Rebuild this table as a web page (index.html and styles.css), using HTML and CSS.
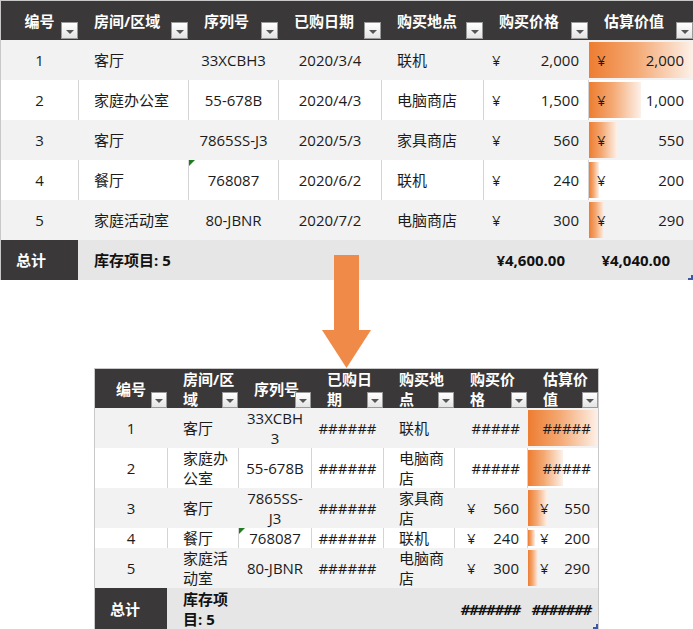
FILE: index.html
```html
<!DOCTYPE html>
<html lang="zh-CN">
<head>
<meta charset="utf-8">
<title>库存表</title>
<link rel="stylesheet" href="styles.css">
</head>
<body>
<div class="tbl top">
  <div class="row hd">
    <div class="c ctr">编号<i class="btn"></i></div>
    <div class="c lft">房间/区域<i class="btn"></i></div>
    <div class="c lft">序列号<i class="btn"></i></div>
    <div class="c lft">已购日期<i class="btn"></i></div>
    <div class="c lft">购买地点<i class="btn"></i></div>
    <div class="c lft">购买价格<i class="btn"></i></div>
    <div class="c lft">估算价值<i class="btn"></i></div>
  </div>
  <div class="row band">
    <div class="c ctr">1</div><div class="c lft">客厅</div><div class="c ctr">33XCBH3</div><div class="c ctr">2020/3/4</div><div class="c lft">联机</div>
    <div class="c acc"><span>¥</span><span>2,000</span></div>
    <div class="c acc"><i class="bar" style="width:104px"></i><span>¥</span><span>2,000</span></div>
  </div>
  <div class="row w">
    <div class="c ctr">2</div><div class="c lft">家庭办公室</div><div class="c ctr">55-678B</div><div class="c ctr">2020/4/3</div><div class="c lft">电脑商店</div>
    <div class="c acc"><span>¥</span><span>1,500</span></div>
    <div class="c acc"><i class="bar" style="width:52px"></i><span>¥</span><span>1,000</span></div>
  </div>
  <div class="row band">
    <div class="c ctr">3</div><div class="c lft">客厅</div><div class="c ctr">7865SS-J3</div><div class="c ctr">2020/5/3</div><div class="c lft">家具商店</div>
    <div class="c acc"><span>¥</span><span>560</span></div>
    <div class="c acc"><i class="bar" style="width:28px"></i><span>¥</span><span>550</span></div>
  </div>
  <div class="row w">
    <div class="c ctr">4</div><div class="c lft">餐厅</div><div class="c ctr"><i class="flag"></i>768087</div><div class="c ctr">2020/6/2</div><div class="c lft">联机</div>
    <div class="c acc"><span>¥</span><span>240</span></div>
    <div class="c acc"><i class="bar" style="width:10px"></i><span>¥</span><span>200</span></div>
  </div>
  <div class="row band">
    <div class="c ctr">5</div><div class="c lft">家庭活动室</div><div class="c ctr">80-JBNR</div><div class="c ctr">2020/7/2</div><div class="c lft">电脑商店</div>
    <div class="c acc"><span>¥</span><span>300</span></div>
    <div class="c acc"><i class="bar" style="width:15px"></i><span>¥</span><span>290</span></div>
  </div>
  <div class="row tot">
    <div class="c lft lbl">总计</div><div class="c lft">库存项目: 5</div><div class="c"></div><div class="c"></div><div class="c"></div>
    <div class="c tv">¥4,600.00</div>
    <div class="c tv">¥4,040.00</div>
  </div>
  <i class="grip"></i>
</div>

<div class="arrow">
  <svg width="49" height="113" viewBox="0 0 49 113"><rect x="12" y="0" width="25" height="76" fill="#f08a48"/><polygon points="0,75 49,75 24.5,113" fill="#f08a48"/></svg>
</div>

<div class="tbl bot">
  <div class="row hd">
    <div class="c ctr">编号<i class="btn sm"></i></div>
    <div class="c lft">房间/区<br>域<i class="btn sm"></i></div>
    <div class="c lft">序列号<i class="btn sm"></i></div>
    <div class="c lft">已购日<br>期<i class="btn sm"></i></div>
    <div class="c lft">购买地<br>点<i class="btn sm"></i></div>
    <div class="c lft">购买价<br>格<i class="btn sm"></i></div>
    <div class="c lft">估算价<br>值<i class="btn sm"></i></div>
  </div>
  <div class="row band">
    <div class="c ctr">1</div><div class="c lft">客厅</div><div class="c ctr">33XCBH<br>3</div><div class="c ctr">######</div><div class="c lft">联机</div>
    <div class="c rt">#####</div>
    <div class="c rt"><i class="bar" style="width:70px"></i><span>#####</span></div>
  </div>
  <div class="row w">
    <div class="c ctr">2</div><div class="c lft">家庭办<br>公室</div><div class="c ctr">55-678B</div><div class="c ctr">######</div><div class="c lft">电脑商<br>店</div>
    <div class="c rt">#####</div>
    <div class="c rt"><i class="bar" style="width:35px"></i><span>#####</span></div>
  </div>
  <div class="row band">
    <div class="c ctr">3</div><div class="c lft">客厅</div><div class="c ctr">7865SS-<br>J3</div><div class="c ctr">######</div><div class="c lft">家具商<br>店</div>
    <div class="c acc"><span>¥</span><span>560</span></div>
    <div class="c acc"><i class="bar" style="width:19px"></i><span>¥</span><span>550</span></div>
  </div>
  <div class="row w short">
    <div class="c ctr">4</div><div class="c lft">餐厅</div><div class="c ctr"><i class="flag"></i>768087</div><div class="c ctr">######</div><div class="c lft">联机</div>
    <div class="c acc"><span>¥</span><span>240</span></div>
    <div class="c acc"><i class="bar" style="width:7px"></i><span>¥</span><span>200</span></div>
  </div>
  <div class="row band">
    <div class="c ctr">5</div><div class="c lft">家庭活<br>动室</div><div class="c ctr">80-JBNR</div><div class="c ctr">######</div><div class="c lft">电脑商<br>店</div>
    <div class="c acc"><span>¥</span><span>300</span></div>
    <div class="c acc"><i class="bar" style="width:10px"></i><span>¥</span><span>290</span></div>
  </div>
  <div class="row tot last">
    <div class="c lft lbl">总计</div><div class="c lft">库存项<br>目: 5</div><div class="c"></div><div class="c"></div><div class="c"></div>
    <div class="c rt hash">#######</div>
    <div class="c rt hash">#######</div>
  </div>
  <i class="grip"></i>
</div>
</body>
</html>
```

FILE: styles.css
```css
html, body {
  margin: 0;
  padding: 0;
  background: #ffffff;
  overflow: hidden;
}

body {
  font-family: "Open Sans", "Noto Sans CJK SC", sans-serif;
  font-size: 15px;
  color: #1b1b1b;
  width: 693px;
  height: 629px;
  position: relative;
}

.tbl {
  display: flex;
  flex-direction: column;
  border-top: 1px solid #c8c8c8;
  border-left: 1px solid #c8c8c8;
  position: relative;
}

.top {
  --cols: 77px 110px 90px 103px 102px 105px 105px;
  width: 692px;
}

.bot {
  --cols: 72px 71px 73px 72px 71px 73px 71px;
  width: 503px;
  margin: 88px 0 0 94px;
  border-right: 1px solid #c8c8c8;
}

.row {
  display: grid;
  grid-template-columns: var(--cols);
  height: 40px;
}

.row.short {
  height: 20px;
}

.row.last {
  height: 41px;
}

.c {
  box-sizing: border-box;
  display: flex;
  align-items: center;
  position: relative;
  line-height: 20px;
  white-space: nowrap;
  border-left: 1px solid transparent;
}

.c:first-child {
  border-left: 0;
}

.row.w .c {
  border-left-color: #d4d4d4;
}

.row.w .c:first-child {
  border-left: 0;
}

.band {
  background: #f2f2f2;
}

.w {
  background: #ffffff;
}

.hd {
  background: #3a3838;
  color: #ffffff;
  font-weight: 700;
  height: 39px;
}

.tot {
  background: #e7e6e6;
  font-weight: 700;
  color: #111111;
}

.tot .lbl {
  background: #3a3838;
  color: #ffffff;
}

.ctr {
  justify-content: center;
  text-align: center;
}

.lft {
  padding-left: 15px;
}

.acc {
  justify-content: space-between;
  padding: 0 9px 0 8px;
}

.bot .acc {
  padding: 0 8px 0 12px;
}

.rt {
  justify-content: flex-end;
  padding-right: 7px;
}

.tv {
  justify-content: flex-end;
  padding-right: 23px;
}

.hash {
  letter-spacing: -1.2px;
  font-style: italic;
}

.c > span {
  position: relative;
}

.bar {
  position: absolute;
  left: 0;
  top: 2px;
  bottom: 2px;
  background: linear-gradient(90deg, #ed7d31 0%, #f4a872 45%, #fdf1e9 100%);
}

.btn {
  position: absolute;
  right: 0;
  bottom: 1px;
  width: 17px;
  height: 17px;
  box-sizing: border-box;
  border: 1px solid #9a9a9a;
  background: linear-gradient(#ffffff, #e4e4e4);
}

.btn.sm {
  width: 16px;
  height: 16px;
}

.btn::after {
  content: "";
  position: absolute;
  left: 50%;
  top: 50%;
  margin-left: -4px;
  margin-top: -1px;
  border-left: 4px solid transparent;
  border-right: 4px solid transparent;
  border-top: 4px solid #555555;
}

.flag {
  position: absolute;
  left: 0;
  top: 0;
  width: 0;
  height: 0;
  border-top: 6px solid #1e7b1e;
  border-right: 6px solid transparent;
}

.grip {
  position: absolute;
  right: 0;
  bottom: 0;
  width: 3px;
  height: 3px;
  border-right: 2px solid #3d56a6;
  border-bottom: 2px solid #3d56a6;
}

.arrow {
  position: absolute;
  left: 322px;
  top: 255px;
  width: 49px;
  height: 113px;
}

.arrow svg {
  display: block;
}
```
